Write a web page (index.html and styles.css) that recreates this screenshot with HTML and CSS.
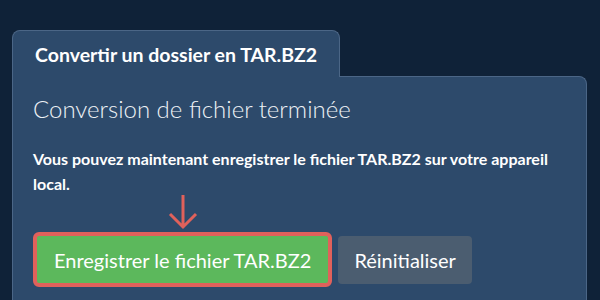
FILE: index.html
```html
<!DOCTYPE html>
<html lang="fr">
<head>
<meta charset="UTF-8" />
<meta name="viewport" content="width=device-width, initial-scale=1" />
<title>Convertir un dossier en TAR.BZ2</title>
<link rel="stylesheet" href="styles.css">
</head>
<body>

<div id="app">
  <div class="tab">Convertir un dossier en TAR.BZ2</div>

  <div class="panel">
    <h2 class="panel-title">Conversion de fichier terminée</h2>
    <p class="panel-text">Vous pouvez maintenant enregistrer le fichier TAR.BZ2 sur votre appareil local.</p>

    <div class="actions">
      <div class="save-wrap">
        <svg class="hint-arrow" width="30" height="36" viewBox="0 0 30 36" aria-hidden="true">
          <path d="M15 1 V33 M2 20 L15 33 L28 20" fill="none" stroke="#e0615b" stroke-width="3" />
        </svg>
        <button class="btn btn-save">Enregistrer le fichier TAR.BZ2</button>
      </div>
      <button class="btn btn-reset">Réinitialiser</button>
    </div>
  </div>
</div>

</body>
</html>
```

FILE: styles.css
```css
:root {
  --bg-color: #0f2238;
  --panel-color: #2d4a6b;
  --border-color: #4b6686;
  --font-family: 'Lato', 'Noto Sans', sans-serif;
}

html, body {
  margin: 0; padding: 0; height: 100%;
  font-family: var(--font-family);
  background: var(--bg-color);
  color: #fff;
  overflow: hidden;
}

#app {
  padding: 30px 13px 0 12px;
  height: 100%;
  box-sizing: border-box;
  display: flex;
  flex-direction: column;
  align-items: flex-start;
}

.tab {
  position: relative;
  z-index: 1;
  margin-bottom: -1px;
  height: 46px;
  line-height: 48px;
  padding: 0 22px 0 22px;
  background: var(--panel-color);
  border: 1px solid var(--border-color);
  border-bottom: none;
  border-radius: 8px 8px 0 0;
  font-size: 19.5px;
  font-weight: 700;
}

.panel {
  flex: 1;
  align-self: stretch;
  background: var(--panel-color);
  border: 1px solid var(--border-color);
  border-bottom: none;
  border-radius: 0 8px 0 0;
  padding: 17px 20px 0 20px;
  overflow: hidden;
}

.panel-title {
  margin: 0;
  font-size: 24px;
  font-weight: 300;
  line-height: 30px;
  color: #eef2f6;
}

.panel-text {
  margin: 22px 0 0 0;
  font-size: 16px;
  font-weight: 700;
  line-height: 25px;
}

.actions {
  display: flex;
  align-items: center;
  margin-top: 36px;
}

.save-wrap {
  position: relative;
  margin-right: 6px;
}

.hint-arrow {
  position: absolute;
  left: 50%;
  bottom: 100%;
  margin-bottom: 2px;
  transform: translateX(-50%);
}

.btn {
  font-family: var(--font-family);
  font-size: 20px;
  color: #fff;
  border: none;
  border-radius: 4px;
  height: 48px;
  cursor: pointer;
}

.btn-save {
  display: block;
  height: 55px;
  padding: 0 17px;
  background: #5cb85c;
  border: 4px solid #e0615b;
  border-radius: 6px;
}

.btn-reset {
  padding: 0 16px;
  background: #4b5d70;
}
```
